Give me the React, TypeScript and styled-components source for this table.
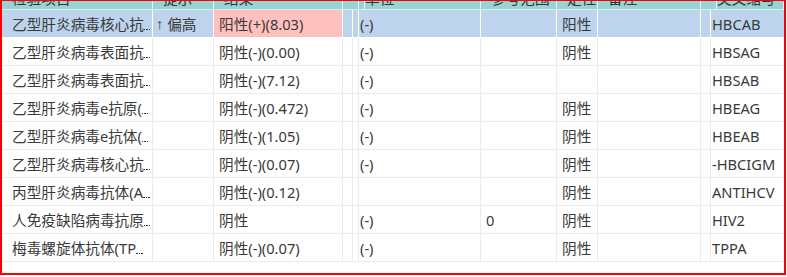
import React, { useLayoutEffect, useRef } from 'react'
import styled, { createGlobalStyle, css } from 'styled-components'

const GlobalStyle = createGlobalStyle`
  html, body {
    margin: 0;
    padding: 0;
    background: #ffffff;
  }
  * {
    box-sizing: border-box;
  }
`

const FONT_STACK = "'Noto Sans', 'Noto Sans CJK SC', sans-serif"
const FONT_SIZE = 14.67
const NAME_ROOM = 132.5 // name column text room, leaving space for the dots

const columns = '151px 61px 129px 6px 6px 126px 76px 41px 103px 6px 1fr'

const headers = [
  '检验项目',
  '提示',
  '结果',
  '',
  '',
  '单位',
  '参考范围',
  '定性',
  '备注',
  '',
  '英文缩写',
]

type ResultRow = {
  name: string
  high?: boolean
  result: string
  unit?: string
  range?: string
  quality?: string
  code: string
}

const rows: ResultRow[] = [
  { name: '乙型肝炎病毒核心抗体', high: true, result: '阳性(+)(8.03)', unit: '(-)', quality: '阳性', code: 'HBCAB' },
  { name: '乙型肝炎病毒表面抗原', result: '阴性(-)(0.00)', unit: '(-)', quality: '阴性', code: 'HBSAG' },
  { name: '乙型肝炎病毒表面抗体', result: '阴性(-)(7.12)', unit: '(-)', code: 'HBSAB' },
  { name: '乙型肝炎病毒e抗原(HBeAg)', result: '阴性(-)(0.472)', unit: '(-)', quality: '阴性', code: 'HBEAG' },
  { name: '乙型肝炎病毒e抗体(HBeAb)', result: '阴性(-)(1.05)', unit: '(-)', quality: '阴性', code: 'HBEAB' },
  { name: '乙型肝炎病毒核心抗体IgM', result: '阴性(-)(0.07)', unit: '(-)', quality: '阴性', code: '-HBCIGM' },
  { name: '丙型肝炎病毒抗体(Anti-HCV)', result: '阴性(-)(0.12)', quality: '阴性', code: 'ANTIHCV' },
  { name: '人免疫缺陷病毒抗原抗体', result: '阴性', unit: '(-)', range: '0', quality: '阴性', code: 'HIV2' },
  { name: '梅毒螺旋体抗体(TPPA)', result: '阴性(-)(0.07)', unit: '(-)', quality: '阴性', code: 'TPPA' },
]

// cut a name down to what fits the column, grid style ("abc...")
const fitName = (name: string) => {
  const ctx = document.createElement('canvas').getContext('2d')
  if (!ctx) return { text: name, cut: false }
  ctx.font = `${FONT_SIZE}px ${FONT_STACK}`
  if (ctx.measureText(name).width <= NAME_ROOM + 7) return { text: name, cut: false }
  let text = name
  while (text.length && ctx.measureText(text).width > NAME_ROOM) text = text.slice(0, -1)
  return { text, cut: true }
}

const NameText = ({ name }: { name: string }) => {
  const { text, cut } = fitName(name)
  return (
    <NameCell title={name}>
      <span>{text}</span>
      {cut && (
        <Dots>
          <i />
          <i />
          <i />
        </Dots>
      )}
    </NameCell>
  )
}

export default function App() {
  const viewRef = useRef<HTMLDivElement>(null)

  // the grid is scrolled down a little, the header peeks out at the top
  useLayoutEffect(() => {
    if (viewRef.current) viewRef.current.scrollTop = 19
  }, [])

  return (
    <>
      <GlobalStyle />
      <Frame ref={viewRef}>
        <Grid>
          <HeaderRow>
            {headers.map((h, i) => (
              <HeaderCell key={i}>{h}</HeaderCell>
            ))}
          </HeaderRow>
          {rows.map((r, i) => (
            <Row key={r.code} selected={i === 0}>
              <NameText name={r.name} />
              <FlagCell>
                {r.high && (
                  <>
                    <Arrow>↑</Arrow>
                    &nbsp;偏高
                  </>
                )}
              </FlagCell>
              <Cell abnormal={r.high}>{r.result}</Cell>
              <Cell />
              <Cell />
              <Cell>{r.unit}</Cell>
              <Cell>{r.range}</Cell>
              <Cell>{r.quality}</Cell>
              <Cell />
              <Cell />
              <Cell last>{r.code}</Cell>
            </Row>
          ))}
        </Grid>
      </Frame>
    </>
  )
}

const Frame = styled.div`
  width: 786px;
  height: 275px;
  border: 2px solid #ff0000;
  border-top-width: 1px;
  overflow: hidden;
  background: #ffffff;
  font-family: ${FONT_STACK};
  font-size: ${FONT_SIZE}px;
  color: #3a3a3a;
`

const Grid = styled.div`
  display: flex;
  flex-direction: column;
  padding-bottom: 24px;
`

const HeaderRow = styled.div`
  display: grid;
  grid-template-columns: ${columns};
  height: 28px;
  background: #97d4d4;
  border-bottom: 1px solid #d6eeee;
`

const HeaderCell = styled.div`
  display: flex;
  align-items: flex-end;
  padding: 0 5px 3px 10px;
  border-right: 1px solid #eaf6f6;
  line-height: 1;
  color: #333333;
  white-space: nowrap;
  overflow: hidden;
`

const Row = styled.div<{ selected?: boolean }>`
  display: grid;
  grid-template-columns: ${columns};
  height: 28px;
  border-bottom: 1px solid ${(p) => (p.selected ? '#ffffff' : '#ebebeb')};
  background: ${(p) => (p.selected ? '#bdd4ec' : '#ffffff')};
  --line: ${(p) => (p.selected ? '#ffffff' : '#ebebeb')};
`

const Cell = styled.div<{ abnormal?: boolean; last?: boolean }>`
  display: flex;
  align-items: center;
  min-width: 0;
  padding: 0 4px 0 5px;
  border-right: 1px solid var(--line);
  white-space: nowrap;
  overflow: hidden;
  ${(p) =>
    p.abnormal &&
    css`
      background: #ffc0c0;
    `}
  ${(p) =>
    p.last &&
    css`
      border-right: none;
    `}
`

const FlagCell = styled(Cell)`
  padding-left: 3px;
`

const NameCell = styled.div`
  display: flex;
  align-items: center;
  min-width: 0;
  padding: 0 0 0 10px;
  border-right: 1px solid var(--line);
  white-space: nowrap;
  overflow: hidden;

  & > span {
    flex: none;
  }
`

/* the grid's own narrow "..." sitting on the baseline */
const Dots = styled.span`
  flex: none;
  display: flex;
  gap: 1px;
  align-self: flex-end;
  margin: 0 0 7px 0;

  i {
    width: 1.5px;
    height: 1.5px;
    background: #333333;
  }
`

const Arrow = styled.span`
  font-family: 'Liberation Sans', sans-serif;
`
